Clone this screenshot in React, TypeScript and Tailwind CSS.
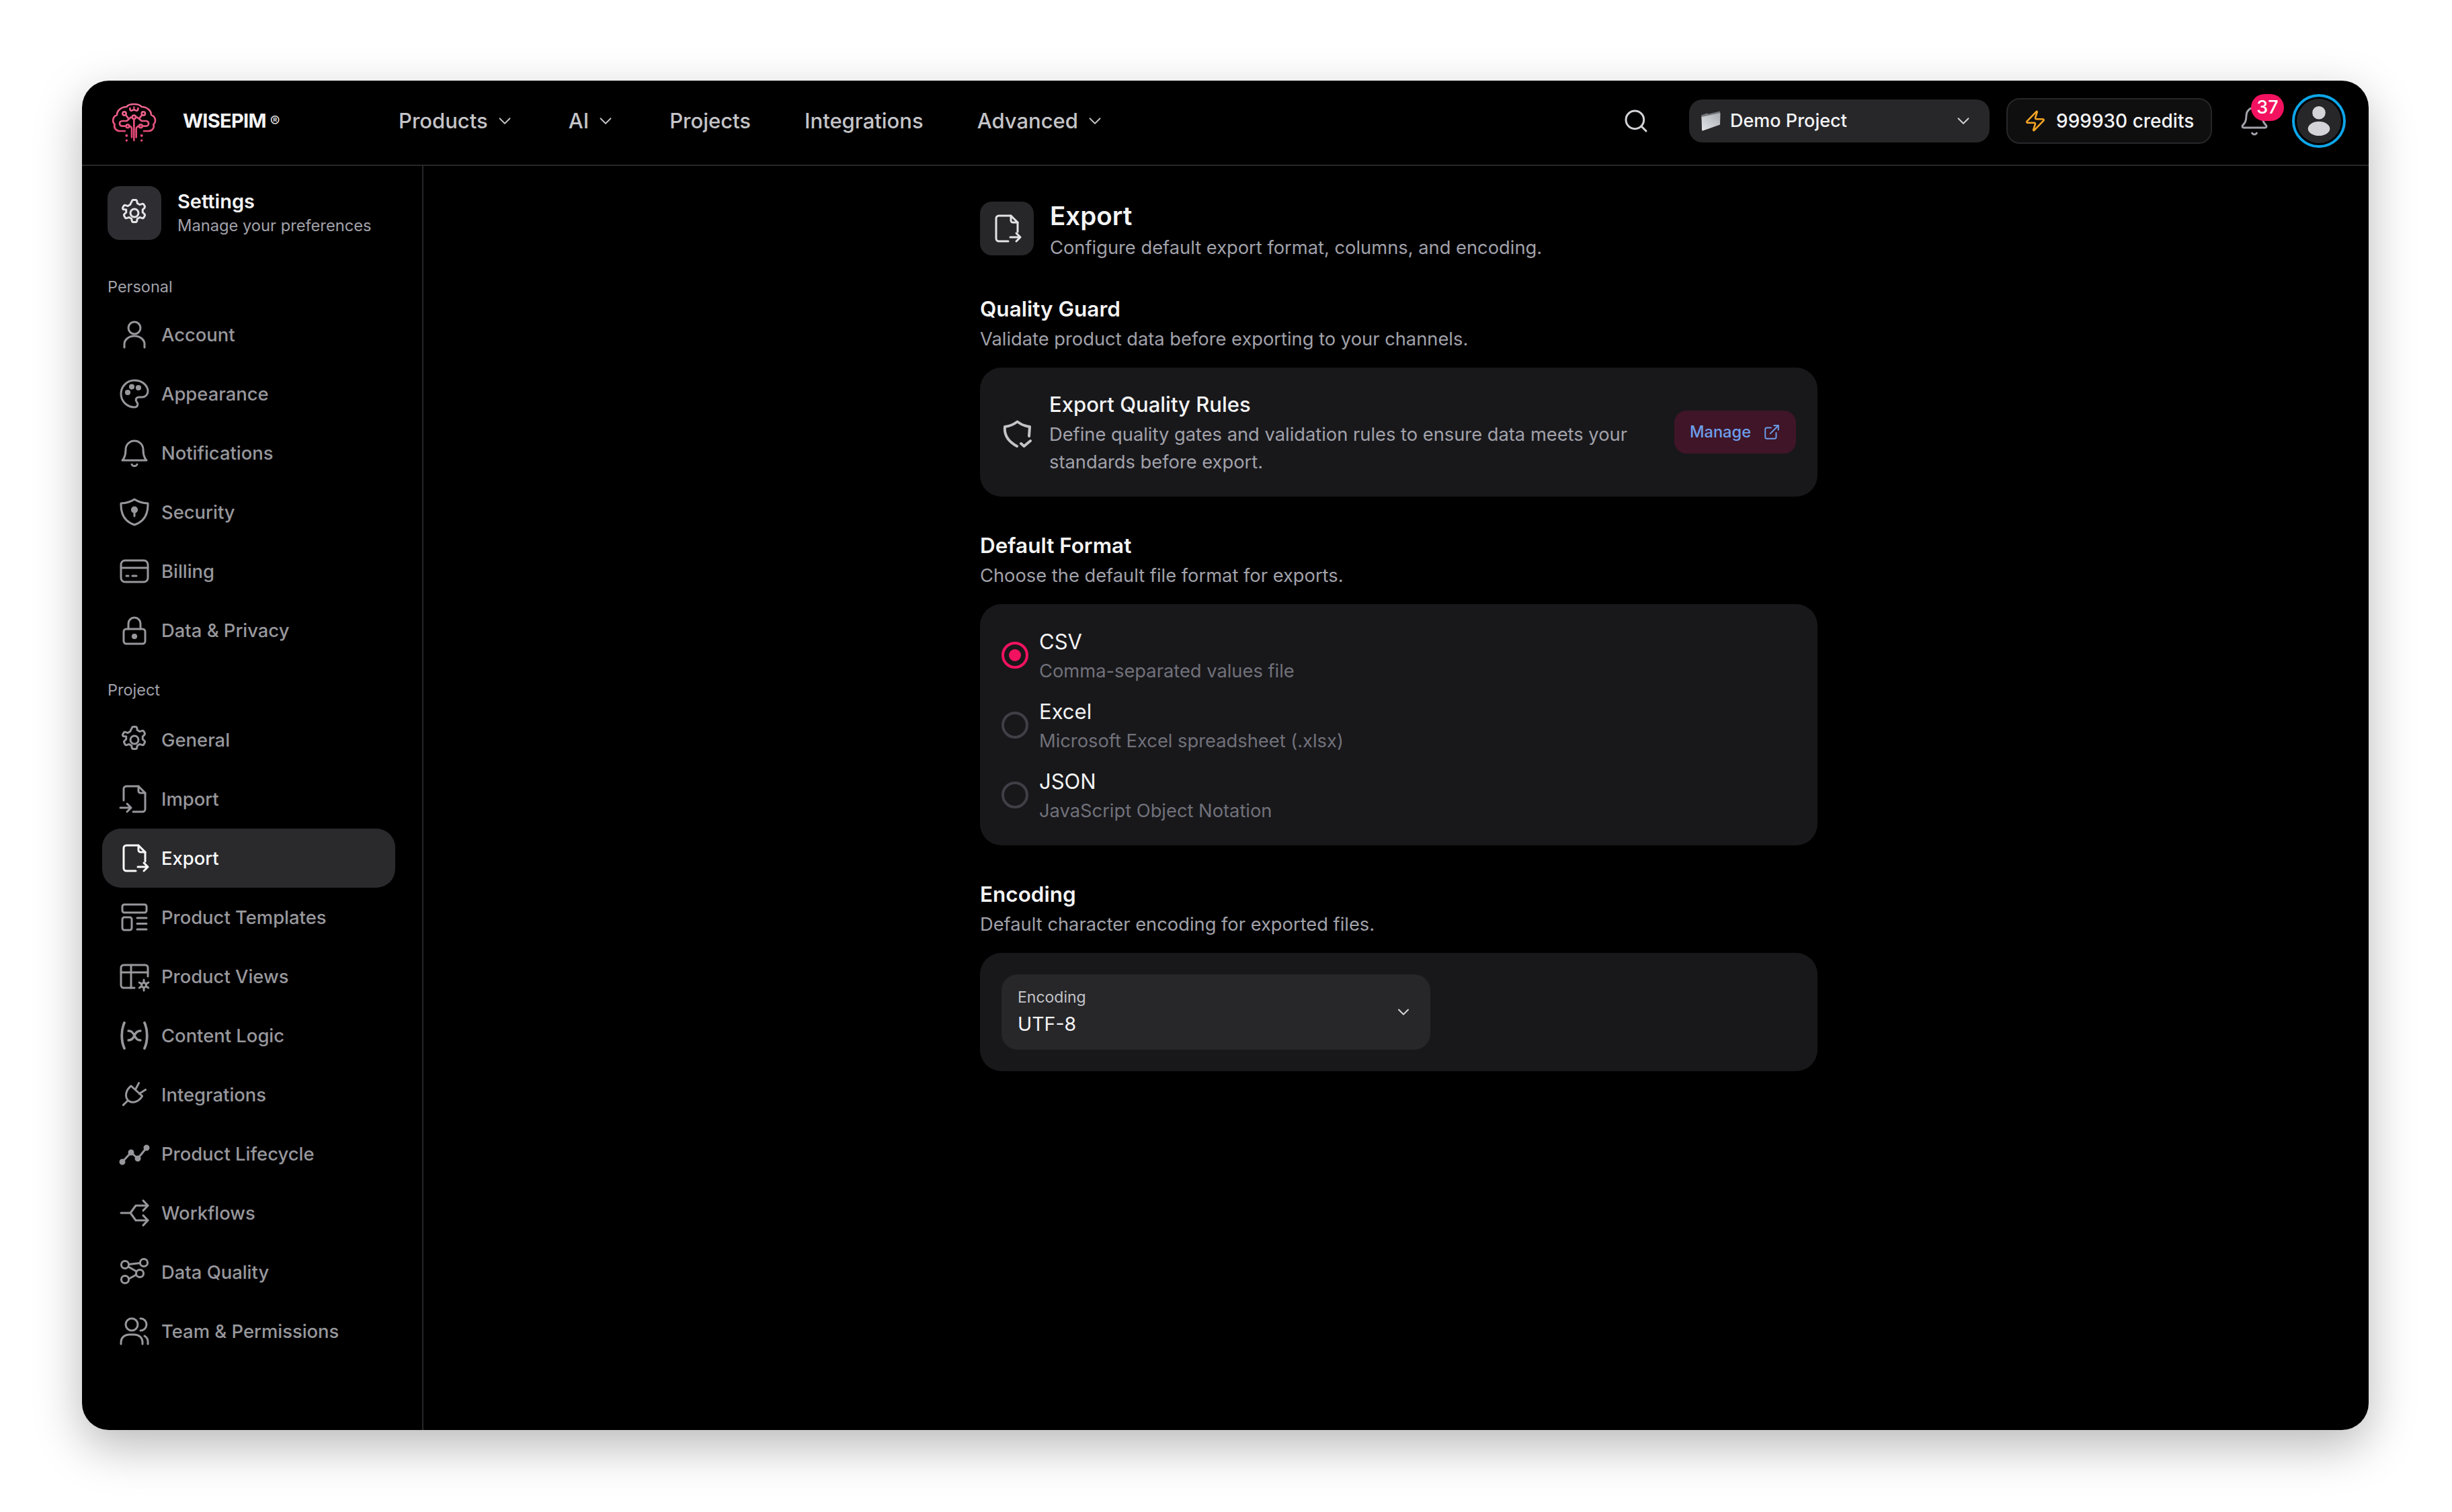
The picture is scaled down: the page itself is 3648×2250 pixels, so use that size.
import { JSX, ReactNode } from "react";
import { ChevronDown, Search, Zap, Bell, ExternalLink } from "lucide-react";

const font = { fontFamily: "Inter, 'Noto Sans', sans-serif" };

function Ico({ children, className = "" }: { children: ReactNode; className?: string }): JSX.Element {
  return (
    <svg viewBox="0 0 24 24" fill="none" stroke="currentColor" strokeWidth={1.5} strokeLinecap="round" strokeLinejoin="round" className={className}>
      {children}
    </svg>
  );
}

const GEAR = (
  <>
    <circle cx="12" cy="12" r="3" />
    <path d="M10.2 2.9a1 1 0 0 1 1-.7h1.6a1 1 0 0 1 1 .7l.4 1.9a7.6 7.6 0 0 1 1.7 1l1.9-.6a1 1 0 0 1 1.1.4l.8 1.4a1 1 0 0 1-.2 1.2l-1.4 1.3a7.6 7.6 0 0 1 0 2l1.4 1.3a1 1 0 0 1 .2 1.2l-.8 1.4a1 1 0 0 1-1.1.4l-1.9-.6a7.6 7.6 0 0 1-1.7 1l-.4 1.9a1 1 0 0 1-1 .7h-1.6a1 1 0 0 1-1-.7l-.4-1.9a7.6 7.6 0 0 1-1.7-1l-1.9.6a1 1 0 0 1-1.1-.4l-.8-1.4a1 1 0 0 1 .2-1.2l1.4-1.3a7.6 7.6 0 0 1 0-2L3.5 9.2a1 1 0 0 1-.2-1.2l.8-1.4a1 1 0 0 1 1.1-.4l1.9.6a7.6 7.6 0 0 1 1.7-1z" />
  </>
);

const EXPORT_FILE = (
  <>
    <path d="M20 14.5V7.5L15 2.5H6a2 2 0 0 0-2 2v15a2 2 0 0 0 2 2h7" />
    <path d="M15 2.5V6a1.5 1.5 0 0 0 1.5 1.5H20" />
    <path d="M14.5 18.5h7.5M19 15.5l3 3-3 3" />
  </>
);

const ICONS: Record<string, JSX.Element> = {
  Account: (
    <>
      <circle cx="12" cy="7" r="4.5" />
      <path d="M4.5 21.5V19a7.5 6 0 0 1 15 0v2.5" />
    </>
  ),
  Appearance: (
    <>
      <path d="M12 2a10 10 0 1 0 0 20c1.6 0 2.4-1 2.4-2.2 0-.7-.3-1.2-.6-1.6-.4-.5-.7-1-.7-1.6 0-1.2 1-2.1 2.2-2.1h2.4a4.3 4.3 0 0 0 4.3-4.3C22 5.6 17.5 2 12 2z" />
      <circle cx="7" cy="11" r="1.3" fill="currentColor" />
      <circle cx="10" cy="6.8" r="1.3" fill="currentColor" />
      <circle cx="15" cy="7.5" r="1.3" fill="currentColor" />
    </>
  ),
  Notifications: (
    <>
      <path d="M18.5 9.5a6.5 6.5 0 0 0-13 0c0 6-2.5 8-2.5 8h18s-2.5-2-2.5-8z" />
      <path d="M10 20.5a2.2 2.2 0 0 0 4 0" />
    </>
  ),
  Security: (
    <>
      <path d="M12 2.5c3 2 6 2.8 10 3 .3 8-2.5 13.5-10 16C4.5 19 1.7 13.5 2 5.5c4-.2 7-1 10-3z" />
      <circle cx="12" cy="10.3" r="1.8" fill="currentColor" />
      <path d="M12 11v4" />
    </>
  ),
  Billing: (
    <>
      <rect x="2" y="4" width="20" height="16" rx="3" />
      <path d="M2 9.5h20M6 15.5h1.5M10.5 15.5h3" />
    </>
  ),
  "Data & Privacy": (
    <>
      <rect x="4" y="11" width="16" height="11" rx="2" />
      <path d="M7.5 11V7a4.5 4.5 0 0 1 9 0v4" />
      <circle cx="12" cy="16.5" r="1.3" fill="currentColor" />
    </>
  ),
  General: GEAR,
  Import: (
    <>
      <path d="M4 13V4.5a2 2 0 0 1 2-2h9l5 5v12a2 2 0 0 1-2 2h-7" />
      <path d="M15 2.5V6a1.5 1.5 0 0 0 1.5 1.5H20" />
      <path d="M1.5 18.5h8M6.5 15.5l3 3-3 3" />
    </>
  ),
  Export: EXPORT_FILE,
  "Product Templates": (
    <>
      <rect x="3" y="2.5" width="18" height="6" rx="1.5" />
      <rect x="3" y="12" width="7" height="9.5" rx="1.5" />
      <path d="M14 12.5h7M14 16.8h7M14 21h7" />
    </>
  ),
  "Product Views": (
    <>
      <path d="M12 20.5H4a2 2 0 0 1-2-2v-13a2 2 0 0 1 2-2h16a2 2 0 0 1 2 2V12" />
      <path d="M2 9h20M9.5 3.5v17" />
      <circle cx="19" cy="18.5" r="1.7" />
      <path d="M19 14.5v1.5M19 21v1.5M15.6 16.5l1.3.8M21.1 19.7l1.3.8M15.6 20.5l1.3-.8M21.1 17.3l1.3-.8" />
    </>
  ),
  "Content Logic": (
    <>
      <path strokeWidth={1.9} d="M4.500 2.500C2 8 2 16 4.500 21.500M19.500 2.500C22 8 22 16 19.500 21.500" />
      <path strokeWidth={1.7} d="M7.500 8.500c2.500 0 3 1 4.500 3.500s2 3.500 4.500 3.500M16.500 8.500c-2 0-3.500 1-4.500 3.500s-2.500 3.500-4.500 3.500" />
    </>
  ),
  Integrations: (
    <>
      <path d="M9.500 5.500L17.800 13C15.500 17 11 19 7.500 16.500 4.500 13.500 5.500 8.500 9.500 5.500z" />
      <path d="M3.700 19.700L6.800 16.600M12.800 8l2.500-4.700M15.700 11.300l4.600-3" />
    </>
  ),
  "Product Lifecycle": (
    <>
      <path d="M3 18l6.500-7 5 4.500L21 7.500" />
      <circle cx="3" cy="18" r="1.500" fill="currentColor" />
      <circle cx="9.500" cy="11" r="1.500" fill="currentColor" />
      <circle cx="14.500" cy="15.500" r="1.500" fill="currentColor" />
      <circle cx="21" cy="7.500" r="1.500" fill="currentColor" />
    </>
  ),
  Workflows: (
    <>
      <path d="M2 12h7l4-5.500h9M9 12l4 5.500h9" />
      <path d="M18.500 2.800l3.500 3.700-3.500 3.700M18.500 13.800l3.500 3.700-3.500 3.700" />
    </>
  ),
  "Data Quality": (
    <>
      <circle cx="5" cy="6.500" r="2.800" />
      <circle cx="19" cy="5" r="2.800" />
      <circle cx="16" cy="13" r="2.800" />
      <circle cx="5" cy="17.500" r="2.800" />
      <path d="M7.800 6.200L16.200 5.200M7.500 8l6 3.500M7.800 17l5.500-3" />
    </>
  ),
  "Team & Permissions": (
    <>
      <circle cx="10" cy="7" r="4.500" />
      <path d="M2 21.500V20a6 5.500 0 0 1 6-5.500h4a6 5.500 0 0 1 6 5.500v1.500" />
      <path d="M16.500 2.500a4.500 4.500 0 0 1 0 9M22 21.500V20a5 5 0 0 0-2.500-4.500" />
    </>
  ),
};

function Logo(): JSX.Element {
  return (
    <svg viewBox="0 0 240 210" fill="none" className="w-[80px] h-[70px] shrink-0" strokeLinecap="round" strokeLinejoin="round">
      <defs>
        <linearGradient id="brain" gradientUnits="userSpaceOnUse" x1="0" y1="20" x2="0" y2="200">
          <stop offset="0" stopColor="#ee6b92" />
          <stop offset="1" stopColor="#e0406e" />
        </linearGradient>
      </defs>
      <g stroke="url(#brain)" strokeWidth={8}>
        <path d="M78 150H55C38 150 26 135 32 120 20 110 22 85 42 78 42 58 62 42 85 42 95 26 140 26 152 42 175 42 195 58 195 78 215 85 218 110 205 120 210 135 200 150 182 150H162" />
        <path d="M118 96V192M108 178V140C108 133 102 128 96 128M128 178V140C128 133 136 128 142 128" />
        <circle cx="118" cy="88" r="8" />
        <circle cx="90" cy="128" r="7" />
        <circle cx="148" cy="128" r="7" />
        <path d="M83 128H66C50 128 50 105 66 105H86L105 88M155 128H172C187 128 187 105 172 105H152L131 88" />
        <circle cx="75" cy="72" r="8" />
        <circle cx="160" cy="72" r="8" />
        <path d="M81 78L92 92M154 78L143 92" />
        <path d="M100 50C100 62 112 62 118 52 124 62 136 62 136 50" />
      </g>
      <g fill="#e8487a">
        <circle cx="100" cy="48" r="4" />
        <circle cx="118" cy="44" r="4" />
        <circle cx="136" cy="48" r="4" />
        <circle cx="85" cy="170" r="6" />
        <circle cx="152" cy="170" r="6" />
        <circle cx="85" cy="192" r="5" />
        <circle cx="152" cy="192" r="5" />
      </g>
    </svg>
  );
}

function NavItem({ label, drop }: { label: string; drop?: boolean }): JSX.Element {
  return (
    <div className="flex items-center gap-[10px] text-[31px] font-medium text-[#c4c4c8]">
      <span>{label}</span>
      {drop && <ChevronDown className="w-[30px] h-[30px] text-[#c4c4c8]" strokeWidth={1.5} />}
    </div>
  );
}

function SideItem({ label, active }: { label: string; active?: boolean }): JSX.Element {
  return (
    <div
      className={`flex items-center h-[88px] pl-[24px] gap-[16px] rounded-[28px] text-[27.4px] font-medium ${
        active ? "bg-[#2a2a2d] text-[#fafafa]" : "text-[#97979c]"
      }`}
    >
      <span className="w-[48px] h-[48px] shrink-0">
        <Ico className="w-[48px] h-[48px]">{ICONS[label]}</Ico>
      </span>
      <span className="pt-[1px]">{label}</span>
    </div>
  );
}

function Section({ title, desc, children }: { title: string; desc: string; children: ReactNode }): JSX.Element {
  return (
    <section>
      <h2 className="text-[31.5px] leading-[40px] font-semibold text-[#f4f4f5]">{title}</h2>
      <p className="mt-[5px] text-[27.3px] leading-[40px] text-[#a1a1aa]">{desc}</p>
      <div className="mt-[22px] rounded-[32px] bg-[#18181b]">{children}</div>
    </section>
  );
}

function Radio({ label, desc, on }: { label: string; desc: string; on?: boolean }): JSX.Element {
  return (
    <div className="flex items-center h-[104px] gap-[16px]">
      <span
        className={`w-[40px] h-[40px] rounded-full flex items-center justify-center border-[4px] ${
          on ? "border-[#f31260]" : "border-[#3f3f46]"
        }`}
      >
        {on && <span className="w-[18px] h-[18px] rounded-full bg-[#f31260]" />}
      </span>
      <div className="pt-[3px]">
        <div className="text-[31px] leading-[44px] text-[#f4f4f5]">{label}</div>
        <div className="text-[27.3px] leading-[44px] text-[#71717a]">{desc}</div>
      </div>
    </div>
  );
}

const PERSONAL = ["Account", "Appearance", "Notifications", "Security", "Billing", "Data & Privacy"];
const PROJECT = ["General", "Import", "Export", "Product Templates", "Product Views", "Content Logic", "Integrations", "Product Lifecycle", "Workflows", "Data Quality", "Team & Permissions"];

export default function App(): JSX.Element {
  return (
    <div className="w-[3648px] h-[2250px] bg-white pt-[120px] pl-[122px] overflow-hidden" style={font}>
      <div className="w-[3402px] h-[2008px] rounded-[40px] bg-black flex flex-col overflow-hidden shadow-[0_24px_70px_rgba(0,0,0,0.28)]">
        {/* TOP BAR */}
        <header className="h-[127px] shrink-0 border-b-2 border-[#27272a] flex items-center pl-[38px] pr-[34px] pb-[5px]">
          <div className="w-[433px] shrink-0 flex items-center">
            <Logo />
            <span className="ml-[32px] text-[29px] font-bold text-[#f4f4f5] tracking-tight">WISEPIM</span>
            <span className="ml-[6px] text-[22px] text-[#e4e4e7]">®</span>
          </div>
          <nav className="flex items-center gap-[80px]">
            <NavItem label="Products" drop />
            <NavItem label="AI" drop />
            <NavItem label="Projects" />
            <NavItem label="Integrations" />
            <NavItem label="Advanced" drop />
          </nav>
          <div className="ml-auto flex items-center">
            <Search className="w-[40px] h-[40px] text-[#d4d4d8] mr-[59px]" strokeWidth={1.8} />
            <div className="w-[447px] h-[64px] rounded-[20px] bg-[#27272a] flex items-center pl-[17px] pr-[24px] text-[27px] font-medium text-[#f4f4f5]">
              <svg viewBox="0 0 30 30" className="w-[30px] h-[30px] mr-[14px] shrink-0">
                <defs>
                  <linearGradient id="folder" x1="1" y1="0" x2="0" y2="1">
                    <stop offset="0" stopColor="#a9adb3" />
                    <stop offset="1" stopColor="#e2e4e7" />
                  </linearGradient>
                </defs>
                <path d="M1 6.500L9.500 3.500 12 4.500 29 .5 28.500 19 3 28z" fill="#74777c" />
                <path d="M1.500 9L29.500 3 29 20.500 3.500 29.500C2.500 29.800 2 29 2 28z" fill="url(#folder)" />
              </svg>
              <span>Demo Project</span>
              <ChevronDown className="ml-auto w-[30px] h-[30px] text-[#d4d4d8]" strokeWidth={1.5} />
            </div>
            <div className="ml-[25px] w-[306px] h-[68px] rounded-[20px] bg-[#0f0f10] border-2 border-[#27272a] flex items-center pl-[24px] gap-[14px] text-[28px] font-medium text-[#f4f4f5]">
              <Zap className="w-[34px] h-[34px] text-[#f5a524]" strokeWidth={1.8} />
              <span>999930 credits</span>
            </div>
            <div className="relative ml-[39px] w-[48px] h-[48px]">
              <Bell className="w-[48px] h-[48px] text-[#a1a1aa]" strokeWidth={1.5} />
              <span className="absolute -top-[16px] left-[19px] w-[49px] h-[40px] rounded-full bg-[#f31260] text-white text-[27px] font-medium flex items-center justify-center">37</span>
            </div>
            <div className="ml-[32px] w-[80px] h-[80px] rounded-full border-[4px] border-[#0ea5e9] flex items-center justify-center">
              <div className="w-[66px] h-[66px] rounded-full bg-[#27272a] flex items-center justify-center">
                <svg viewBox="0 0 44 54" className="w-[36px] h-[44px]" fill="#d4d4d8">
                  <circle cx="22" cy="12" r="12" />
                  <ellipse cx="22" cy="41" rx="20" ry="13" />
                </svg>
              </div>
            </div>
          </div>
        </header>

        <div className="flex-1 flex min-h-0">
          {/* SIDEBAR */}
          <aside className="w-[508px] shrink-0 border-r-2 border-[#27272a] pt-[30px] pl-[30px] pr-[40px]">
            <div className="flex items-center pl-[8px] gap-[24px]">
              <div className="w-[80px] h-[80px] rounded-[18px] bg-[#2e2e32] flex items-center justify-center text-[#e4e4e7]">
                <Ico className="w-[48px] h-[48px]">{GEAR}</Ico>
              </div>
              <div>
                <div className="text-[29px] leading-[38px] font-semibold text-[#f4f4f5]">Settings</div>
                <div className="text-[23.7px] leading-[34px] text-[#a1a1aa]">Manage your preferences</div>
              </div>
            </div>
            <div className="mt-[43px] pl-[8px] h-[54px] flex items-center text-[23.5px] text-[#a1a1aa]">Personal</div>
            {PERSONAL.map((l) => (
              <SideItem key={l} label={l} />
            ))}
            <div className="mt-[15px] pl-[8px] h-[60px] flex items-center text-[23.5px] text-[#a1a1aa]">Project</div>
            {PROJECT.map((l) => (
              <SideItem key={l} label={l} active={l === "Export"} />
            ))}
          </aside>

          {/* MAIN */}
          <main className="flex-1 pt-[53px] pl-[828px]">
            <div className="w-[1246px]">
              <div className="flex gap-[24px] h-[88px]">
                <div className="w-[80px] h-[80px] rounded-[18px] bg-[#27272a] flex items-center justify-center text-[#e4e4e7]">
                  <Ico className="w-[48px] h-[48px]">{EXPORT_FILE}</Ico>
                </div>
                <div>
                  <div className="text-[38.5px] leading-[42px] font-semibold text-[#f4f4f5]">Export</div>
                  <div className="mt-[7px] text-[27.3px] leading-[40px] text-[#a1a1aa]">Configure default export format, columns, and encoding.</div>
                </div>
              </div>

              <div className="mt-[52px]">
                <Section title="Quality Guard" desc="Validate product data before exporting to your channels.">
                  <div className="h-[192px] flex items-center pl-[22px] pr-[32px]">
                    <svg viewBox="0 0 70 80" fill="none" stroke="currentColor" strokeWidth={4} strokeLinecap="round" strokeLinejoin="round" className="w-[70px] h-[80px] shrink-0 text-[#c4c4c8]">
                      <path d="M51 46L52 32Q42 31 33.500 24.500 25 31 15 32 13 50 33 61" />
                      <path d="M39 57L43.500 61 53 53" />
                    </svg>
                    <div className="ml-[11px] flex-1 pt-[3px]">
                      <div className="text-[31px] leading-[40px] font-medium text-[#f4f4f5]">Export Quality Rules</div>
                      <div className="mt-[4px] w-[900px] text-[27.3px] leading-[41px] text-[#a1a1aa]">
                        Define quality gates and validation rules to ensure data meets your standards before export.
                      </div>
                    </div>
                    <div className="w-[181px] h-[64px] rounded-[18px] bg-[#3f1527] flex items-center justify-center gap-[18px] text-[23.6px] font-medium text-[#6d9eeb]">
                      <span>Manage</span>
                      <ExternalLink className="w-[26px] h-[26px]" strokeWidth={1.8} />
                    </div>
                  </div>
                </Section>
              </div>

              <div className="mt-[53px]">
                <Section title="Default Format" desc="Choose the default file format for exports.">
                  <div className="h-[359px] px-[32px] pt-[24px]">
                    <Radio label="CSV" desc="Comma-separated values file" on />
                    <Radio label="Excel" desc="Microsoft Excel spreadsheet (.xlsx)" />
                    <Radio label="JSON" desc="JavaScript Object Notation" />
                  </div>
                </Section>
              </div>

              <div className="mt-[53px]">
                <Section title="Encoding" desc="Default character encoding for exported files.">
                  <div className="p-[32px]">
                    <div className="w-[638px] h-[112px] rounded-[24px] bg-[#27272a] flex items-center pl-[24px] pr-[26px]">
                      <div>
                        <div className="text-[23px] leading-[32px] text-[#c4c4c8]">Encoding</div>
                        <div className="mt-[4px] text-[28.5px] leading-[40px] text-[#f4f4f5]">UTF-8</div>
                      </div>
                      <ChevronDown className="ml-auto w-[28px] h-[28px] text-[#d4d4d8]" strokeWidth={1.8} />
                    </div>
                  </div>
                </Section>
              </div>
            </div>
          </main>
        </div>
      </div>
    </div>
  );
}
